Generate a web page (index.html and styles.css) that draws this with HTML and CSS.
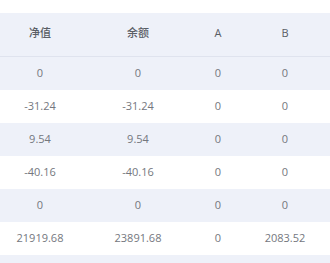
FILE: index.html
```html
<!DOCTYPE html>
<html>
<head>
<meta charset="utf-8">
<link rel="stylesheet" href="styles.css">
</head>
<body>
<div class="wrap">
<table class="tbl">
  <colgroup>
    <col class="c1"><col class="c2"><col class="c3"><col class="c4">
  </colgroup>
  <thead>
    <tr><th>净值</th><th>余额</th><th>A</th><th>B</th></tr>
  </thead>
  <tbody>
    <tr class="alt"><td>0</td><td>0</td><td>0</td><td>0</td></tr>
    <tr><td>-31.24</td><td>-31.24</td><td>0</td><td>0</td></tr>
    <tr class="alt"><td>9.54</td><td>9.54</td><td>0</td><td>0</td></tr>
    <tr><td>-40.16</td><td>-40.16</td><td>0</td><td>0</td></tr>
    <tr class="alt"><td>0</td><td>0</td><td>0</td><td>0</td></tr>
    <tr><td>21919.68</td><td>23891.68</td><td>0</td><td>2083.52</td></tr>
    <tr class="alt"><td>&nbsp;</td><td></td><td></td><td></td></tr>
  </tbody>
</table>
</div>
</body>
</html>
```
FILE: styles.css
```css
html, body { margin: 0; padding: 0; background: #fff; overflow: hidden; }
.wrap { padding-top: 13px; }
.tbl {
  border-collapse: collapse;
  table-layout: fixed;
  width: 330px;
  font-family: "Open Sans", "Noto Sans CJK SC", sans-serif;
  font-size: 11px;
  color: #74777e;
}
.c1 { width: 80px; }
.c2 { width: 116px; }
.c3 { width: 44px; }
.c4 { width: 90px; }
.tbl th {
  height: 38px;
  padding: 0 0 5px;
  font-weight: 500;
  color: #5a5e66;
  background: #eef1f9;
  border-bottom: 1px solid #dfe3ee;
  text-align: center;
}
.tbl td {
  height: 31px;
  padding: 0 0 2px;
  text-align: center;
}
.tbl tr.alt td { background: #eef1f9; }
```
